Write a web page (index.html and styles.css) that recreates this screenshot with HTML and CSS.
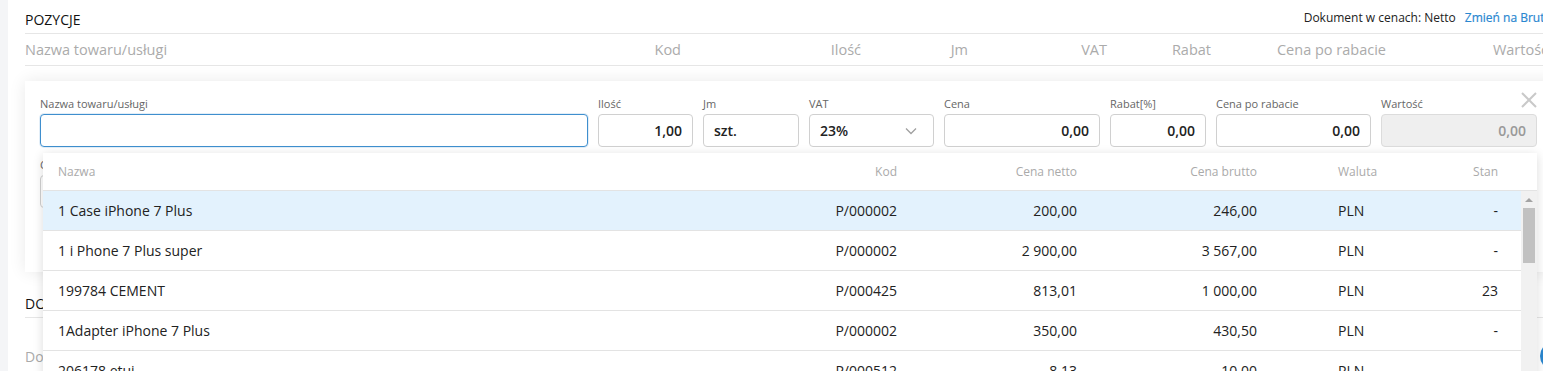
FILE: index.html
```html
<!DOCTYPE html>
<html lang="pl">
<head>
	<meta charset="UTF-8" />
	<title>Pozycje dokumentu</title>
	<link rel="stylesheet" href="styles.css">
</head>
<body>
	<div class="page">
		<section class="positions">
			<div class="section-head">
				<h2>POZYCJE</h2>
				<div class="price-mode">Dokument w cenach: Netto <a href="#">Zmień na Brutto</a></div>
			</div>
			<div class="cols">
				<span class="c-name">Nazwa towaru/usługi</span>
				<span>Kod</span>
				<span>Ilość</span>
				<span>Jm</span>
				<span>VAT</span>
				<span>Rabat</span>
				<span>Cena po rabacie</span>
				<span>Wartość</span>
			</div>

			<div class="edit-card">
				<button class="close" type="button">
					<svg width="16" height="16" viewBox="0 0 16 16"><path d="M1 1L15 15M15 1L1 15" stroke="#c9c9c9" stroke-width="2" fill="none"/></svg>
				</button>
				<div class="fields">
					<label class="field f-name"><span>Nazwa towaru/usługi</span><input type="text" class="focused left" value="" /></label>
					<label class="field f-qty"><span>Ilość</span><input type="text" value="1,00" /></label>
					<label class="field f-jm"><span>Jm</span><input type="text" class="left" value="szt." /></label>
					<label class="field f-vat"><span>VAT</span>
						<div class="select">23%
							<svg width="12" height="8" viewBox="0 0 12 8"><path d="M1 1.5L6 6.5L11 1.5" stroke="#a0a0a0" stroke-width="1.3" fill="none"/></svg>
						</div>
					</label>
					<label class="field f-price"><span>Cena</span><input type="text" value="0,00" /></label>
					<label class="field f-disc"><span>Rabat[%]</span><input type="text" value="0,00" /></label>
					<label class="field f-after"><span>Cena po rabacie</span><input type="text" value="0,00" /></label>
					<label class="field f-value"><span>Wartość</span><input type="text" class="disabled" value="0,00" disabled /></label>
				</div>
				<div class="fields second">
					<label class="field f-wide"><span>Cena zakupu</span><input type="text" class="left" value="" /></label>
				</div>

				<div class="suggest">
					<div class="s-head">
						<span>Nazwa</span>
						<span class="r">Kod</span>
						<span class="r">Cena netto</span>
						<span class="r">Cena brutto</span>
						<span></span>
						<span>Waluta</span>
						<span class="r">Stan</span>
					</div>
					<div class="s-body">
						<div class="s-rows">
							<div class="s-row active">
								<span>1 Case iPhone 7 Plus</span><span class="r">P/000002</span><span class="r">200,00</span><span class="r">246,00</span><span></span><span>PLN</span><span class="r">-</span>
							</div>
							<div class="s-row">
								<span>1 i Phone 7 Plus super</span><span class="r">P/000002</span><span class="r">2&nbsp;900,00</span><span class="r">3&nbsp;567,00</span><span></span><span>PLN</span><span class="r">-</span>
							</div>
							<div class="s-row">
								<span>199784 CEMENT</span><span class="r">P/000425</span><span class="r">813,01</span><span class="r">1&nbsp;000,00</span><span></span><span>PLN</span><span class="r">23</span>
							</div>
							<div class="s-row">
								<span>1Adapter iPhone 7 Plus</span><span class="r">P/000002</span><span class="r">350,00</span><span class="r">430,50</span><span></span><span>PLN</span><span class="r">-</span>
							</div>
							<div class="s-row">
								<span>206178 etui</span><span class="r">P/000512</span><span class="r">8,13</span><span class="r">10,00</span><span></span><span>PLN</span><span class="r">-</span>
							</div>
						</div>
						<div class="scrollbar">
							<div class="sb-arrow"></div>
							<div class="sb-thumb"></div>
						</div>
					</div>
				</div>
			</div>
		</section>

		<section class="extra">
			<div class="section-head">
				<h2>DOKUMENTY POWIĄZANE</h2>
			</div>
			<div class="extra-row">
				<span>Dokument powiązany</span>
				<span class="add-btn"></span>
			</div>
		</section>
	</div>
</body>
</html>
```

FILE: styles.css
```css
html,body {
	margin: 0;
	padding: 0;
}
body {
	background-color: #f4f5f7;
	font-family: "Open Sans", "Liberation Sans", sans-serif;
	color: #222;
	overflow: hidden;
}
.page {
	margin-left: 8px;
	padding-left: 17px;
	width: 1535px;
	min-height: 371px;
	background-color: #fff;
}
.section-head {
	display: flex;
	justify-content: space-between;
	align-items: center;
	height: 28px;
	padding-top: 5px;
	border-bottom: 1px solid #e6e6e6;
}
.section-head h2 {
	margin: 0;
	font-size: 14px;
	font-weight: 400;
	color: #111;
}
.price-mode {
	font-size: 12px;
	color: #222;
	margin-top: -4px;
	margin-right: 4px;
}
.price-mode a {
	color: #2a87d0;
	font-weight: 400;
	-webkit-text-stroke: 0.2px #2a87d0;
	text-decoration: none;
	margin-left: 6px;
}
.cols {
	display: grid;
	grid-template-columns: 560px 96px 180px 107px 139px 104px 175px 162px;
	align-items: center;
	height: 31px;
	border-bottom: 1px solid #e6e6e6;
	font-size: 14.5px;
	color: #ababab;
	text-align: right;
}
.cols .c-name {
	text-align: left;
}

/* karta edycji pozycji */
.edit-card {
	position: relative;
	margin-top: 15px;
	height: 191px;
	box-sizing: border-box;
	padding: 15px 0 0 15px;
	background-color: #fff;
	box-shadow: 0 0 16px rgba(0,0,0,0.09);
}
.close {
	position: absolute;
	top: 11px;
	right: 23px;
	padding: 0;
	border: none;
	background: none;
	width: 16px;
	height: 16px;
	cursor: pointer;
}
.close svg {
	display: block;
}
.fields {
	display: flex;
	gap: 10px;
}
.fields.second {
	margin-top: 10px;
}
.field {
	display: flex;
	flex-direction: column;
}
.field > span {
	font-size: 11px;
	line-height: 16px;
	color: #666;
	margin-bottom: 2px;
}
.field input,
.select {
	height: 33px;
	box-sizing: border-box;
	border: 1px solid #d0d0d0;
	border-radius: 4px;
	padding: 0 10px;
	font-family: inherit;
	font-size: 14px;
	font-weight: 600;
	color: #222;
	text-align: right;
	outline: none;
	background-color: #fff;
	width: 100%;
}
.field input.left {
	text-align: left;
}
.field input.focused {
	border-color: #3f8fce;
	box-shadow: 0 0 0 1px rgba(63,143,206,0.15);
}
.field input.disabled {
	background-color: #efefef;
	border-color: #dcdcdc;
	color: #999;
}
.select {
	display: flex;
	align-items: center;
	justify-content: space-between;
	padding: 0 16px 0 10px;
}
.f-name { width: 548px; }
.f-qty { width: 95px; }
.f-jm { width: 96px; }
.f-vat { width: 125px; }
.f-price { width: 156px; }
.f-disc { width: 96px; }
.f-after { width: 155px; }
.f-value { width: 156px; }
.f-wide { width: 400px; }

/* lista podpowiedzi */
.suggest {
	position: absolute;
	left: 18px;
	top: 72px;
	width: 1494px;
	background-color: #fff;
	box-shadow: 0 2px 10px rgba(0,0,0,0.14);
	z-index: 2;
}
.s-head,
.s-row {
	display: grid;
	grid-template-columns: 1fr 120px 180px 180px 81px 80px 80px;
	align-items: center;
}
.s-head {
	height: 37px;
	padding: 0 39px 0 15px;
	border-bottom: 1px solid #e3e3e3;
	font-size: 12px;
	color: #aaa;
}
.s-head .r,
.s-row .r {
	text-align: right;
}
.s-body {
	display: flex;
}
.s-rows {
	flex: 1;
}
.s-row {
	height: 39px;
	padding: 0 23px 0 15px;
	border-bottom: 1px solid #e3e3e3;
	font-size: 14px;
	color: #222;
}
.s-row.active {
	background-color: #e3f2fd;
}
.scrollbar {
	width: 16px;
	background-color: #f1f1f1;
	display: flex;
	flex-direction: column;
	align-items: center;
}
.sb-arrow {
	margin-top: 7px;
	width: 0;
	height: 0;
	border-left: 4px solid transparent;
	border-right: 4px solid transparent;
	border-bottom: 4px solid #a3a3a3;
}
.sb-thumb {
	margin-top: 6px;
	width: 12px;
	height: 55px;
	background-color: #c1c1c1;
}

/* sekcja pod kartą */
.extra {
	margin-top: 12px;
}
.extra-row {
	display: flex;
	justify-content: space-between;
	align-items: center;
	padding-top: 24px;
	margin-right: -8px;
	font-size: 14px;
	color: #aaa;
}
.add-btn {
	width: 28px;
	height: 28px;
	border-radius: 50%;
	background-color: #2a87d0;
}
```
